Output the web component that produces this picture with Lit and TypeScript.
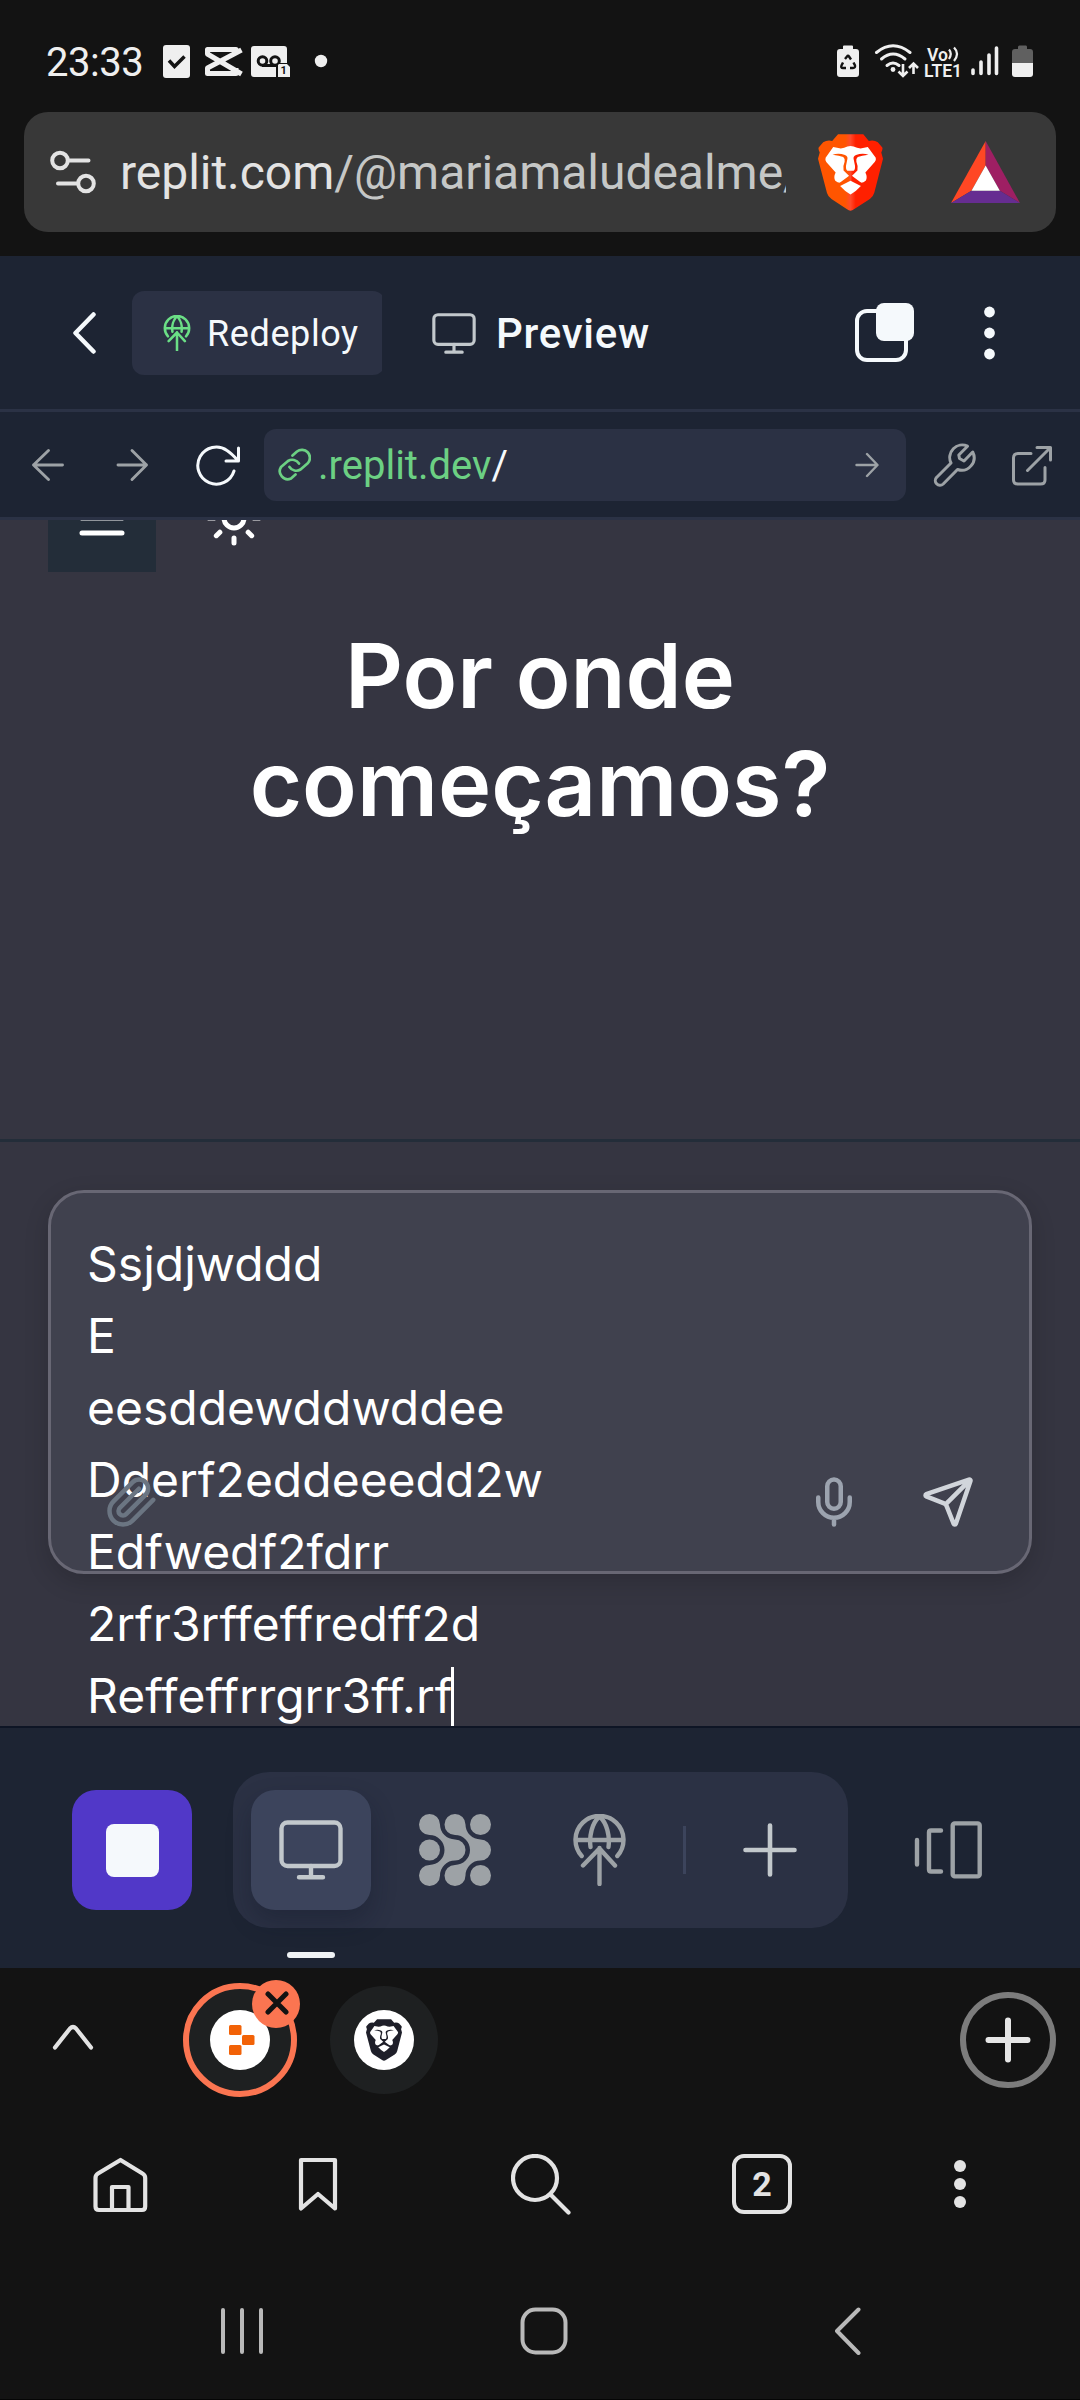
import { LitElement, html, svg, css } from "lit";
import { customElement, property } from "lit/decorators.js";

const lion = (cls: string, from: string, mid: string, to: string, id: string) => html`
  <svg class=${cls} viewBox="808 401 188 230" preserveAspectRatio="none">
    <defs>
      <linearGradient id=${id} x1="0" x2="1" y1="0" y2="0">
        <stop offset="0" stop-color=${from} />
        <stop offset="0.42" stop-color=${from} />
        <stop offset="0.5" stop-color=${mid} />
        <stop offset="0.58" stop-color=${to} />
        <stop offset="1" stop-color=${to} />
      </linearGradient>
    </defs>
    <path
      fill="url(#${id})"
      d="M866 402H939L955 422Q970 418 981 426L994 441Q996 446 991 456L996 475L971 576Q968 588 958 595L912 626Q902 634 892 626L847 595Q837 588 834 577L808 475L813 456Q808 446 810 441L823 426Q835 418 849 422Z"
    />
    <path
      fill="#fff"
      d="M852 440L874 444Q884 443 893 438Q902 435 911 438Q921 443 931 444L952 440L975 472Q977 478 972 485L945 516Q952 530 946 541Q934 551 922 543Q912 533 902 527Q892 533 882 543Q870 551 858 541Q852 530 859 516L832 485Q828 478 830 472Z"
    />
    <path
      fill="url(#${id})"
      d="M850 463Q868 457 886 464Q895 468 893 476L889 496Q888 508 893 511H911Q916 508 915 496L911 476Q909 468 918 464Q936 457 954 463Q934 465 923 470Q917 475 919 484Q925 498 922 510L905 527L902 530L899 527L882 510Q879 498 885 484Q887 475 881 470Q870 465 850 463Z"
    />
    <path fill="url(#${id})" d="M902 523L936 549L926 553L902 540L878 553L868 549Z" />
    <path fill="#fff" d="M902 541L932 556Q918 572 902 582Q886 572 872 556Z" />
  </svg>
`;

const deployGlyph = svg`
  <path d="M8.7 42A24 24 0 1 1 44.3 42M2.5 26H50.5" />
  <path d="M17.5 33C16 22 19 9 26.5 2.5C34 9 37 22 35.5 33" />
  <path d="M26.500 34V70M10 51.500L26.500 34.500L42 51.500" />
`;

const monitorGlyph = svg`
  <rect x="2.500" y="2.500" width="59" height="43.500" rx="6" />
  <path d="M32 46V57M20 57.300H44" />
`;

@customElement("status-bar")
class StatusBar extends LitElement {
  static styles = css`
    :host {
      display: flex;
      align-items: center;
      justify-content: space-between;
      height: 112px;
      padding: 12px 47px 0 46px;
      box-sizing: border-box;
      color: #efefef;
      font-family: Roboto, sans-serif;
    }
    .time {
      width: 117px;
      padding-top: 2px;
      font-size: 40px;
      line-height: 48px;
      letter-spacing: -0.45px;
      white-space: nowrap;
    }
    .group {
      display: flex;
      align-items: center;
    }
    svg {
      display: block;
      flex: none;
    }
  `;
  render() {
    return html`
      <div class="group">
        <span class="time">23:33</span>
        <svg width="166" height="36" viewBox="163 45 166 36">
          <rect x="163" y="46" width="27" height="33" rx="3" fill="#efefef" />
          <path d="M169 61.500L174.500 67.500L184.500 57.500" fill="none" stroke="#131313" stroke-width="3.500" />
          <path d="M236 55V50.500H207.500V55L241.500 75M236 69V74.500H207.500V69L241.500 51" fill="none" stroke="#efefef" stroke-width="5" stroke-linejoin="round" />
          <path d="M254 47H284Q287 47 287 50V64H280Q276 64 276 68V78H254Q251 78 251 75V50Q251 47 254 47Z" fill="#efefef" />
          <circle cx="262.500" cy="62" r="4.300" fill="none" stroke="#131313" stroke-width="3" />
          <circle cx="275" cy="62" r="4.300" fill="none" stroke="#131313" stroke-width="3" />
          <path d="M262 66.500H276" stroke="#131313" stroke-width="3" />
          <path d="M279 65H287L290 68V78H278V66Z" fill="#efefef" />
          <text x="280.500" y="75" font-size="11" font-weight="700" fill="#131313">1</text>
          <circle cx="321" cy="62" r="6.200" fill="#efefef" />
        </svg>
      </div>
      <svg width="196" height="36" viewBox="837 45 196 36" fill="none">
        <path d="M843 47.500Q843 46.500 844 46.500H852Q853 46.500 853 47.500V50H856Q859 50 859 53V75Q859 78 856 78H840Q837 78 837 75V53Q837 50 840 50H843Z" fill="#efefef" />
        <path d="M845 60L847 57.500Q848 56 849 57.500L851 60.500M853.500 63.500L855 66.500Q855.500 69 853 69H850M846 69H843Q840.500 69 841.500 66.500L843 63.500" stroke="#131313" stroke-width="2.400" />
        <g stroke="#efefef" stroke-width="3" stroke-linecap="round">
          <path d="M876.500 53.500Q893 40 910 53.500" />
          <path d="M881.500 60Q893 50 905 60" />
          <path d="M887 66.500Q893 61.500 899 66.500" />
        </g>
        <circle cx="893" cy="70.500" r="2.400" fill="#efefef" />
        <path d="M903 65V77M898.500 72.500L903 77L907.500 72.500M913.500 75V64.500M909 69L913.500 64.500L918 69" stroke="#efefef" stroke-width="2.600" />
        <g fill="#efefef" font-weight="600">
          <text x="927" y="61.500" font-size="18" textLength="21" lengthAdjust="spacingAndGlyphs">Vo</text>
          <text x="924" y="77.500" font-size="18.500" textLength="38" lengthAdjust="spacingAndGlyphs">LTE1</text>
        </g>
        <path d="M949 50.500Q952.500 54.500 949 60M954 48.500Q960 54.500 954 62" stroke="#efefef" stroke-width="2.200" />
        <path d="M973 71V74.500M981 63V74.500M989 56V74.500M996.500 49V74.500" stroke="#efefef" stroke-width="3.600" stroke-linecap="round" />
        <path d="M1018 48Q1018 46.500 1019.500 46.500H1026Q1027 46.500 1027 48V50H1030Q1033 50 1033 53V64H1012V53Q1012 50 1015 50H1018Z" fill="#606060" />
        <path d="M1012 64H1033V75Q1033 78 1030 78H1015Q1012 78 1012 75Z" fill="#efefef" />
      </svg>
    `;
  }
}

@customElement("address-bar")
class AddressBar extends LitElement {
  @property() domain = "replit.com";
  @property() path = "/@mariamaludealme/";
  static styles = css`
    :host {
      display: block;
      height: 144px;
      padding: 0 24px 24px;
      box-sizing: border-box;
    }
    .bar {
      display: flex;
      align-items: center;
      height: 120px;
      padding: 0 36px 0 25px;
      border-radius: 24px;
      background: #383838;
      font: 48px/60px Roboto, sans-serif;
      color: #c5c7c6;
    }
    svg {
      display: block;
      flex: none;
    }
    .url {
      width: 667px;
      margin: 2px 32px 0 23px;
      overflow: hidden;
      white-space: nowrap;
      letter-spacing: -0.03px;
    }
    .domain {
      color: #e3e3e3;
    }
    .lion {
      width: 65px;
      height: 77px;
      margin-right: 68px;
    }
  `;
  render() {
    return html`
      <div class="bar">
        <svg width="48" height="44" viewBox="48 150 48 44" fill="none" stroke="#e3e3e3" stroke-width="4" stroke-linecap="round">
          <circle cx="59" cy="160.500" r="7.800" />
          <path d="M68 160.500H87.500M57 183.500H76" />
          <circle cx="85" cy="183.500" r="7.800" />
        </svg>
        <div class="url"><span class="domain">${this.domain}</span>${this.path}</div>
        ${lion("lion", "#ff5500", "#ff4a2c", "#ff2000", "flame")}
        <svg width="69" height="62" viewBox="1195 422 199 184" preserveAspectRatio="none">
          <path d="M1295 422L1195 606L1254 570L1295 495Z" fill="#ff4724" />
          <path d="M1295 422L1394 606L1336 570L1295 495Z" fill="#9e1f63" />
          <path d="M1195 606H1394L1336 570H1254Z" fill="#662d91" />
          <path d="M1295 495L1336 570H1254Z" fill="#fff" />
        </svg>
      </div>
    `;
  }
}

@customElement("workspace-header")
class WorkspaceHeader extends LitElement {
  static styles = css`
    :host {
      display: block;
      background: #1d2433;
      color: #f5f9fc;
      font-family: Roboto, sans-serif;
    }
    svg {
      display: block;
      flex: none;
      fill: none;
      stroke-linecap: round;
      stroke-linejoin: round;
    }
    .title-row {
      display: flex;
      align-items: center;
      height: 156px;
      padding: 1px 85px 0 73px;
      box-sizing: border-box;
      border-bottom: 3px solid #2b3245;
    }
    .clip {
      width: 250px;
      margin: 0 50px 0 36px;
      overflow: hidden;
    }
    .redeploy {
      display: flex;
      align-items: center;
      width: 253px;
      height: 84px;
      padding-left: 31px;
      box-sizing: border-box;
      border-radius: 12px;
      background: #2b3144;
      font-size: 36px;
      letter-spacing: 0.6px;
    }
    .redeploy span {
      margin-left: 16px;
      padding-top: 1px;
    }
    .name {
      flex: 1;
      margin-left: 20px;
      padding-top: 1px;
      font-size: 42px;
      font-weight: 500;
      letter-spacing: 0.75px;
    }
    .stack {
      margin-right: 69px;
    }
    .url-row {
      display: flex;
      align-items: center;
      height: 108px;
      padding: 1px 28px 0 31px;
      box-sizing: border-box;
      border-bottom: 3px solid #2b3245;
    }
    .field {
      display: flex;
      align-items: center;
      width: 642px;
      height: 72px;
      margin: 0 27px 0 23px;
      padding: 0 27px 0 13px;
      box-sizing: border-box;
      flex: none;
      border-radius: 12px;
      background: #2b3144;
      font-size: 40px;
      letter-spacing: 0;
    }
    .host {
      flex: 1;
      margin-left: 7px;
      padding-top: 1px;
    }
    .green {
      color: #6cd083;
    }
  `;
  render() {
    return html`
      <div class="title-row">
        <svg width="23" height="42" viewBox="0 0 23 42" stroke="#f5f9fc" stroke-width="4.500"><path d="M20.500 2.500L2.500 21L20.500 39.500" /></svg>
        <div class="clip">
          <div class="redeploy">
            <svg width="28" height="36" viewBox="0 0 53 71" stroke="#6bdf86" stroke-width="5">${deployGlyph}</svg>
            <span>Redeploy</span>
          </div>
        </div>
        <svg width="44" height="41" viewBox="0 0 64 60" stroke="#c2c8cc" stroke-width="4.600">${monitorGlyph}</svg>
        <span class="name">Preview</span>
        <svg class="stack" width="60" height="60" viewBox="855 303 60 60">
          <rect x="857" y="311" width="49" height="49" rx="10" stroke="#f5f9fc" stroke-width="4" />
          <rect x="876" y="303" width="38" height="38" rx="8" fill="#f5f9fc" />
        </svg>
        <svg width="11" height="54" viewBox="0 0 11 54">
          <g fill="#f5f9fc"><circle cx="5.500" cy="6" r="5.400" /><circle cx="5.500" cy="27" r="5.400" /><circle cx="5.500" cy="48" r="5.400" /></g>
        </svg>
      </div>
      <div class="url-row">
        <svg width="210" height="42" viewBox="31 444 210 42">
          <g stroke="#9da2a6" stroke-width="2.900">
            <path d="M48.500 450.500L33.500 465L48.500 479.500M33.500 465H62.500" />
            <path d="M132 450.500L146.500 465L132 479.500M146.500 465H118" />
          </g>
          <path d="M234 471A18.500 18.500 0 1 1 227 450.500Q231.500 453.500 238 460.500M238.500 448V461H226" stroke="#f5f9fc" stroke-width="3" />
        </svg>
        <div class="field">
          <svg width="34" height="34" viewBox="277 448 34 34" stroke="#6cd083" stroke-width="2.700">
            <path d="M292.500 455.500L297 451.500A8 8 0 0 1 308 463L300.500 469.500A8 8 0 0 1 289.500 467" />
            <path d="M295.500 474.500L291 478.500A8 8 0 0 1 281 467L288 461A8 8 0 0 1 299 463.500" />
          </svg>
          <span class="host"><span class="green">.replit.dev</span>/</span>
          <svg width="24" height="26" viewBox="0 0 24 26" stroke="#9da2a6" stroke-width="2.400"><path d="M1.500 13H22M12 2L22.500 13L12 24" /></svg>
        </div>
        <svg width="119" height="44" viewBox="933 442 119 44" stroke="#9da2a6" stroke-width="3">
          <path d="M967.500 445.200A12.500 12.500 0 0 0 951 462L936.800 476.200A4.500 4.500 0 0 0 943.200 483L957.500 468.500A12.500 12.500 0 0 0 972.700 451L964 460L959.500 457.500L958.800 454Z" />
          <path d="M1031 452.500H1018Q1013.500 452.500 1013.500 457V479Q1013.500 483 1018 483H1040.500Q1045 483 1045 479V466.500M1037 446.500H1050.500V459M1050 447L1027.500 469.500" />
        </svg>
      </div>
    `;
  }
}

@customElement("chat-preview")
class ChatPreview extends LitElement {
  @property({ attribute: false }) lines = [
    "Ssjdjwddd",
    "E",
    "eesddewddwddee",
    "Dderf2eddeeedd2w",
    "Edfwedf2fdrr",
    "2rfr3rffeffredff2d",
    "Reffeffrrgrr3ff.rf",
  ];
  static styles = css`
    :host {
      display: flex;
      flex-direction: column;
      height: 1208px;
      box-sizing: border-box;
      overflow: hidden;
      background: #353541;
      color: #fff;
      font-family: Inter, sans-serif;
      border-bottom: 2px solid #0e1525;
    }
    svg {
      display: block;
      flex: none;
      fill: none;
      stroke: currentColor;
      stroke-width: 2;
      stroke-linecap: round;
      stroke-linejoin: round;
    }
    .hero {
      height: 619px;
      border-bottom: 3px solid #232d39;
    }
    .nav {
      display: flex;
      align-items: center;
      gap: 48px;
      margin: -56px 0 50px 48px;
    }
    .menu {
      display: flex;
      align-items: center;
      justify-content: center;
      width: 108px;
      height: 108px;
      background: #232d39;
    }
    h1 {
      width: 660px;
      margin: 0 auto;
      font-size: 90px;
      line-height: 108px;
      font-weight: 600;
      text-align: center;
    }
    .composer {
      padding: 48px 48px 0;
    }
    .box {
      position: relative;
      height: 384px;
      padding: 35px 36px;
      box-sizing: border-box;
      border: 3px solid #686774;
      border-radius: 36px;
      background: #40414e;
      box-shadow: 0 8px 24px rgba(0, 0, 0, 0.16);
    }
    .line {
      height: 72px;
      font-size: 48px;
      line-height: 72px;
      white-space: nowrap;
    }
    .caret {
      display: inline-block;
      width: 3px;
      height: 60px;
      margin-left: -1px;
      vertical-align: -14px;
      background: #fff;
    }
    .tools {
      position: absolute;
      left: 54px;
      right: 54px;
      bottom: 42px;
      display: flex;
      align-items: center;
    }
    .clip {
      color: #6b7582;
      margin-right: auto;
    }
    .mic {
      color: #9ca3af;
      margin-right: 60px;
    }
    .send {
      color: #d1d5db;
    }
  `;
  render() {
    const last = this.lines.length - 1;
    return html`
      <div class="hero">
        <div class="nav">
          <div class="menu">
            <svg width="60" height="60" viewBox="0 0 24 24"><path d="M4 6h16M4 12h16M4 18h16" /></svg>
          </div>
          <svg width="60" height="60" viewBox="0 0 24 24">
            <circle cx="12" cy="12" r="4" />
            <path d="M12 2v2M12 20v2M4.930 4.930l1.410 1.410M17.660 17.660l1.410 1.410M2 12h2M20 12h2M6.340 17.660l-1.410 1.410M19.070 4.930l-1.410 1.410" />
          </svg>
        </div>
        <h1>Por onde começamos?</h1>
      </div>
      <div class="composer">
        <div class="box">
          ${this.lines.map(
            (t, i) => html`<div class="line">${t}${i === last ? html`<span class="caret"></span>` : null}</div>`
          )}
          <div class="tools">
            <svg class="clip" width="54" height="54" viewBox="0 0 24 24">
              <path d="m21.440 11.050-9.190 9.190a6 6 0 0 1-8.490-8.490l8.570-8.570A4 4 0 1 1 18 8.840l-8.590 8.570a2 2 0 0 1-2.830-2.830l8.490-8.480" />
            </svg>
            <svg class="mic" width="54" height="54" viewBox="0 0 24 24">
              <path d="M12 2a3 3 0 0 0-3 3v7a3 3 0 0 0 6 0V5a3 3 0 0 0-3-3ZM19 10v2a7 7 0 0 1-14 0v-2M12 19v3" />
            </svg>
            <svg class="send" width="54" height="54" viewBox="0 0 24 24">
              <path d="M14.536 21.686a.5.5 0 0 0 .937-.024l6.500-19a.496.496 0 0 0-.635-.635l-19 6.500a.5.5 0 0 0-.024.937l7.930 3.180a2 2 0 0 1 1.112 1.110zM21.854 2.147l-10.940 10.939" />
            </svg>
          </div>
        </div>
      </div>
    `;
  }
}

@customElement("workspace-dock")
class WorkspaceDock extends LitElement {
  static styles = css`
    :host {
      display: flex;
      align-items: flex-start;
      height: 240px;
      padding: 44px 97px 0 72px;
      box-sizing: border-box;
      background: #1d2433;
    }
    svg {
      display: block;
      flex: none;
      fill: none;
      stroke-linecap: round;
      stroke-linejoin: round;
    }
    .stop {
      display: flex;
      align-items: center;
      justify-content: center;
      width: 120px;
      height: 120px;
      margin-top: 18px;
      border-radius: 24px;
      background: #5138c8;
    }
    .square {
      width: 53px;
      height: 53px;
      border-radius: 8px;
      background: #f5f9fc;
    }
    .pill {
      display: flex;
      align-items: center;
      gap: 24px;
      width: 615px;
      height: 156px;
      margin: 0 66px 0 41px;
      padding: 0 18px;
      box-sizing: border-box;
      border-radius: 36px;
      background: #2b3144;
    }
    .tile {
      display: flex;
      align-items: center;
      justify-content: center;
      width: 120px;
      height: 120px;
      border-radius: 24px;
    }
    .active {
      position: relative;
      background: #3c445c;
      box-shadow: 0 12px 24px rgba(14, 21, 37, 0.3);
    }
    .active::after {
      content: "";
      position: absolute;
      left: 36px;
      top: 162px;
      width: 48px;
      height: 6px;
      border-radius: 3px;
      background: #eff2f4;
    }
    .rule {
      width: 3px;
      height: 48px;
      background: #3c445c;
    }
    .views {
      margin-top: 49px;
    }
  `;
  render() {
    return html`
      <div class="stop"><div class="square"></div></div>
      <div class="pill">
        <div class="tile active">
          <svg width="64" height="60" viewBox="0 0 64 60" stroke="#c2c8cc" stroke-width="4.400">${monitorGlyph}</svg>
        </div>
        <div class="tile">
          <svg width="72" height="72" viewBox="0 0 72 72">
            <g fill="#9da2a6">
              <circle cx="61.500" cy="10.500" r="10.500" />
              <circle cx="10.500" cy="36" r="10.500" />
              <circle cx="61.500" cy="61.500" r="10.500" />
              <path d="M21 10.500A15 15 0 0 0 36 25.500A10.500 10.500 0 0 1 36 46.500A15 15 0 0 0 21 61.500A10.500 10.500 0 1 1 10.500 51A15 15 0 0 0 10.500 21A10.500 10.500 0 1 1 21 10.500Z" />
              <path d="M46.500 10.500A15 15 0 0 0 61.500 25.500A10.500 10.500 0 0 1 61.500 46.500A15 15 0 0 0 46.500 61.500A10.500 10.500 0 1 1 36 51A15 15 0 0 0 36 21A10.500 10.500 0 1 1 46.500 10.500Z" />
            </g>
          </svg>
        </div>
        <div class="tile">
          <svg width="53" height="72" viewBox="0 0 53 72" stroke="#9da2a6" stroke-width="4.400">${deployGlyph}</svg>
        </div>
        <div class="rule"></div>
        <div class="tile">
          <svg width="54" height="54" viewBox="0 0 54 54" stroke="#c2c8cc" stroke-width="4.600"><path d="M27 2.500V51.500M2.500 27H51.500" /></svg>
        </div>
      </div>
      <svg class="views" width="69" height="58" viewBox="914 1821 69 58" stroke="#9da2a6" stroke-width="4.400">
        <path d="M917 1840V1864.500M941 1830.500H931Q929 1830.500 929 1832.500V1869.500Q929 1871.500 931 1871.500H941" />
        <rect x="952.700" y="1823.400" width="27" height="53" rx="2" />
      </svg>
    `;
  }
}

@customElement("browser-chrome")
class BrowserChrome extends LitElement {
  static styles = css`
    :host {
      display: block;
      height: 432px;
      box-sizing: border-box;
      background: #131313;
      border-bottom: 1px solid #050505;
      font-family: Roboto, sans-serif;
    }
    svg {
      display: block;
      flex: none;
      fill: none;
      stroke: #e3e3e3;
      stroke-width: 4.2;
      stroke-linecap: round;
      stroke-linejoin: round;
    }
    .tabs {
      display: flex;
      align-items: center;
      height: 144px;
      padding: 0 24px 0 51px;
    }
    .expand {
      margin-bottom: 7px;
    }
    .tab {
      position: relative;
      display: flex;
      align-items: center;
      justify-content: center;
      width: 108px;
      height: 108px;
      border-radius: 50%;
      background: #1e2021;
    }
    .current {
      width: 102px;
      height: 102px;
      margin: 0 33px 0 88px;
      border: 6px solid #fb7551;
    }
    .disc {
      display: flex;
      align-items: center;
      justify-content: center;
      width: 60px;
      height: 60px;
      border-radius: 50%;
      background: #fff;
    }
    .close {
      position: absolute;
      left: 63px;
      top: -9px;
      display: flex;
      align-items: center;
      justify-content: center;
      width: 48px;
      height: 48px;
      border-radius: 50%;
      background: #fb7551;
    }
    .close svg {
      stroke: #131313;
      stroke-width: 5;
      margin: -3px 0 0 1px;
    }
    .mini {
      width: 36px;
      height: 42px;
      stroke: none;
    }
    .logo {
      stroke: none;
      margin-left: 3px;
    }
    .add {
      display: flex;
      align-items: center;
      justify-content: center;
      width: 84px;
      height: 84px;
      margin-left: auto;
      border: 6px solid #7c7c7c;
      border-radius: 50%;
    }
    .add svg {
      stroke-width: 6;
      stroke: #e6e6e6;
    }
    .actions {
      display: flex;
      align-items: center;
      height: 144px;
      padding-left: 92px;
    }
    .bookmark {
      margin-left: 148px;
    }
    .search {
      margin: 2px 0 0 172px;
    }
    .count {
      display: flex;
      align-items: center;
      justify-content: center;
      width: 52px;
      height: 52px;
      margin: 0 162px 0 161px;
      border: 4px solid #e3e3e3;
      border-radius: 12px;
      color: #e3e3e3;
      font-size: 34px;
      font-weight: 700;
    }
    .dots {
      stroke: none;
      fill: #e3e3e3;
    }
    .system {
      display: flex;
      align-items: center;
      height: 143px;
      padding-left: 220px;
    }
    .system svg {
      stroke: #b9b9b9;
      stroke-width: 4;
      margin-top: 6px;
    }
    .system .home {
      margin-left: 256px;
    }
    .system .back {
      margin-left: 266px;
    }
  `;
  render() {
    return html`
      <div class="tabs">
        <svg class="expand" width="44" height="26" viewBox="0 0 44 26"><path d="M4 23.500L19 4.500Q22 1.500 25 4.500L40 23.500" /></svg>
        <div class="tab current">
          <div class="disc">
            <svg class="logo" width="26" height="30" viewBox="0 0 26 30">
              <g fill="#f26207"><rect width="12.500" height="10" rx="1.500" /><rect x="13" y="10" width="12.500" height="10" rx="1.500" /><rect y="20" width="12.500" height="10" rx="1.500" /></g>
            </svg>
          </div>
          <div class="close"><svg width="24" height="24" viewBox="0 0 24 24"><path d="M3 3L21 21M21 3L3 21" /></svg></div>
        </div>
        <div class="tab"><div class="disc">${lion("mini", "#1e1f29", "#1e1f29", "#1e1f29", "ink")}</div></div>
        <div class="add"><svg width="46" height="46" viewBox="0 0 46 46"><path d="M23 3.500V42.500M3.500 23H42.500" /></svg></div>
      </div>
      <div class="actions">
        <svg width="57" height="57" viewBox="92 2155 57 57">
          <path d="M120.500 2159L142.500 2172.500Q145.200 2174 145.200 2177V2205.500Q145.200 2209 142 2209H99Q95.500 2209 95.500 2205.500V2177Q95.500 2174 98 2172.500ZM112 2208V2186H128.500V2208" />
        </svg>
        <svg class="bookmark" width="42" height="57" viewBox="297 2156 42 57">
          <path d="M301 2160H335V2208.500L318 2194L301 2208.500Z" />
        </svg>
        <svg class="search" width="60" height="62" viewBox="511 2155 60 62">
          <circle cx="535" cy="2179" r="22" /><path d="M551 2196L568.500 2213.500" />
        </svg>
        <div class="count">2</div>
        <svg class="dots" width="12" height="48" viewBox="0 0 12 48"><circle cx="6" cy="6" r="6" /><circle cx="6" cy="24" r="6" /><circle cx="6" cy="42" r="6" /></svg>
      </div>
      <div class="system">
        <svg width="44" height="48" viewBox="220 2307 44 48"><path d="M223 2310V2352M242 2310V2352M261 2310V2352" /></svg>
        <svg class="home" width="48" height="48" viewBox="0 0 48 48"><rect x="2.500" y="2.500" width="43" height="43" rx="13" /></svg>
        <svg class="back" width="28" height="48" viewBox="0 0 28 48"><path d="M24.500 2.500L3 24L24.500 46" /></svg>
      </div>
    `;
  }
}

@customElement("app-root")
class AppRoot extends LitElement {
  static styles = css`
    :host {
      display: block;
      width: 1080px;
      height: 2400px;
      overflow: hidden;
      background: #131313;
    }
  `;
  render() {
    return html`
      <status-bar></status-bar>
      <address-bar></address-bar>
      <workspace-header></workspace-header>
      <chat-preview></chat-preview>
      <workspace-dock></workspace-dock>
      <browser-chrome></browser-chrome>
    `;
  }
}
